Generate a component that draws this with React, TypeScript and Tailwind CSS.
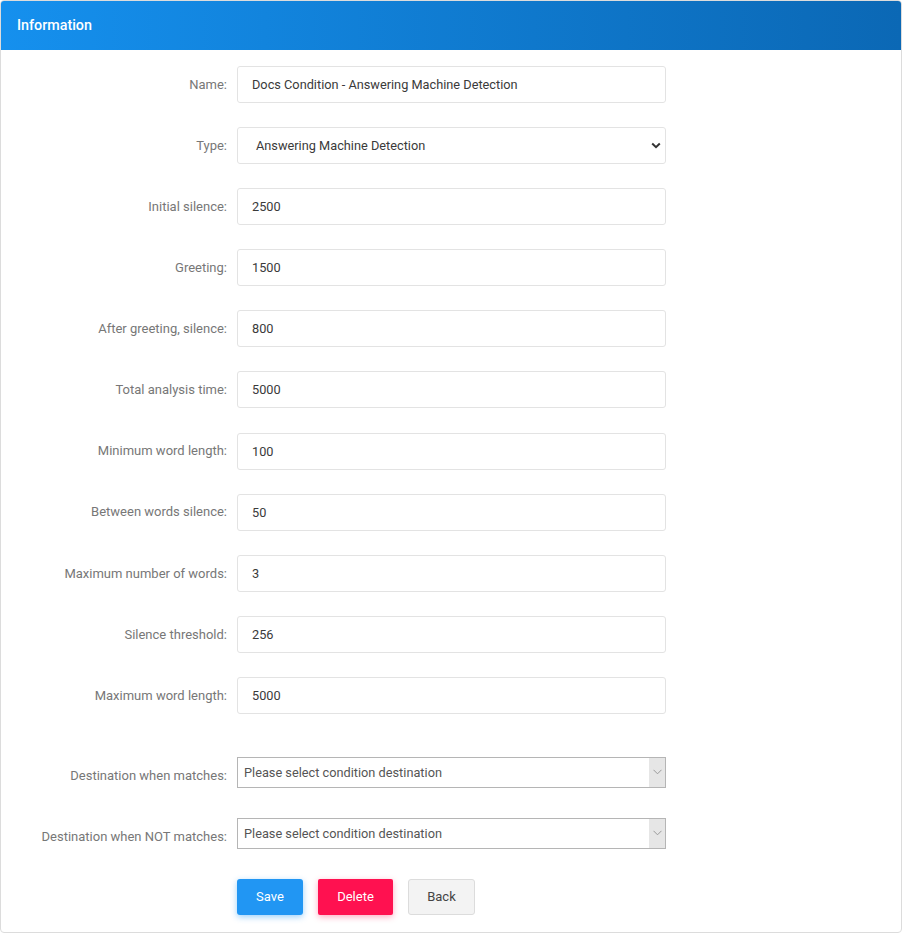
import React from 'react';

const fields = [
  { label: 'Initial silence:', value: '2500' },
  { label: 'Greeting:', value: '1500' },
  { label: 'After greeting, silence:', value: '800' },
  { label: 'Total analysis time:', value: '5000' },
  { label: 'Minimum word length:', value: '100' },
  { label: 'Between words silence:', value: '50' },
  { label: 'Maximum number of words:', value: '3' },
  { label: 'Silence threshold:', value: '256' },
  { label: 'Maximum word length:', value: '5000' },
];

function Row({ label, children, labelClass = '' }: { label: string; children: React.ReactNode; labelClass?: string }) {
  return (
    <div className="flex items-center gap-[10px]">
      <label className={`w-[226px] shrink-0 text-right text-[13px] text-[#777] ${labelClass}`}>{label}</label>
      <div className="w-[429px]">{children}</div>
    </div>
  );
}

function TextInput({ value }: { value: string }) {
  return (
    <div className="flex h-[37px] items-center rounded-[3px] border border-[#e3e3e3] bg-white px-[14px] text-[12.75px] text-[#3a3a3a]">
      {value}
    </div>
  );
}

function DestinationSelect() {
  return (
    <div className="flex h-[31px] items-stretch border border-[#b5b5b5] bg-white text-[12.75px] text-[#555]">
      <div className="flex flex-1 items-center pl-[6px]">Please select condition destination</div>
      <div className="flex w-[16px] items-center justify-center bg-[#e6e6e6]">
        <svg width="9" height="6" viewBox="0 0 9 6" fill="none">
          <path d="M0.5 0.8 L4.5 4.8 L8.5 0.8" stroke="#999" strokeWidth="1" />
        </svg>
      </div>
    </div>
  );
}

export default function App() {
  return (
    <div className="min-h-[933px] bg-white" style={{ fontFamily: 'Roboto, "Liberation Sans", sans-serif' }}>
      <div className="overflow-hidden rounded-[4px] border border-[#dcdcdc] bg-white">
        <div className="flex h-[49px] items-center bg-gradient-to-r from-[#1590ee] to-[#0b68b5] px-[16px] text-[14.3px] font-medium text-white">
          Information
        </div>
        <div className="flex flex-col pb-[17px] pt-[16px]">
          <div className="flex flex-col gap-[24.1px]">
            <Row label="Name:">
              <TextInput value="Docs Condition - Answering Machine Detection" />
            </Row>
            <Row label="Type:">
              <div className="flex h-[37px] items-center justify-between rounded-[3px] border border-[#e3e3e3] bg-white pl-[18px] pr-[4px] text-[12.75px] text-[#3a3a3a]">
                <span>Answering Machine Detection</span>
                <svg width="10" height="7" viewBox="0 0 10 7" fill="none">
                  <path d="M1.2 1.5 L5 5.2 L8.8 1.5" stroke="#333" strokeWidth="2" />
                </svg>
              </div>
            </Row>
            {fields.map((f) => (
              <Row key={f.label} label={f.label}>
                <TextInput value={f.value} />
              </Row>
            ))}
          </div>
          <div className="mt-[43px] flex flex-col gap-[30px]">
            <Row label="Destination when matches:" labelClass="pt-[6px]">
              <DestinationSelect />
            </Row>
            <Row label="Destination when NOT matches:" labelClass="pt-[6px]">
              <DestinationSelect />
            </Row>
          </div>
          <div className="mt-[30px] flex gap-[15px] pl-[236px]">
            <button className="h-[36px] w-[66px] rounded-[3px] bg-[#2196f3] text-[13px] text-white shadow-[0_2px_6px_rgba(33,150,243,0.45)]">
              Save
            </button>
            <button className="h-[36px] w-[75px] rounded-[2px] bg-[#ff1150] text-[13px] text-white shadow-[0_2px_6px_rgba(255,17,80,0.35)]">
              Delete
            </button>
            <button className="h-[36px] w-[67px] rounded-[3px] border border-[#dcdcdc] bg-[#f3f3f3] text-[13px] text-[#444]">
              Back
            </button>
          </div>
        </div>
      </div>
    </div>
  );
}
